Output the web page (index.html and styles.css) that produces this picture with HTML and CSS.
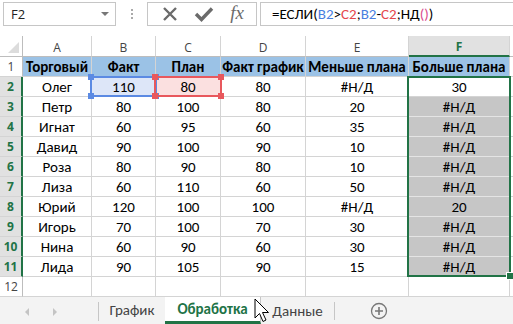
FILE: index.html
```html
<!DOCTYPE html>
<html lang="ru">
<head>
    <meta charset="UTF-8">
    <title>Обработка</title>
    <link rel="stylesheet" href="styles.css">
</head>
<body>
    <div class="app">
        <!-- Formula bar -->
        <div class="formula-bar">
            <div class="name-box">
                <span>F2</span>
                <span class="dropdown"></span>
            </div>
            <div class="grip"><i></i><i></i><i></i></div>
            <div class="fx-buttons">
                <svg width="16" height="16" viewBox="0 0 16 16"><path d="M2 2 L14 14 M14 2 L2 14" stroke="#6b6b6b" stroke-width="2.4" fill="none"/></svg>
                <svg width="20" height="16" viewBox="0 0 20 16"><path d="M2 8 L7.5 13.5 L18 2.5" stroke="#6b6b6b" stroke-width="3.4" fill="none"/></svg>
                <span class="fx">fx</span>
            </div>
            <div class="formula">=ЕСЛИ(<span class="ref-b">B2</span>&gt;<span class="ref-c">C2</span>;<span class="ref-b">B2</span>-<span class="ref-c">C2</span>;НД<span class="paren">()</span>)</div>
        </div>

        <!-- Sheet grid -->
        <div class="sheet-wrap">
            <div class="sheet">
                <div class="corner"></div>
                <div class="col-head">A</div>
                <div class="col-head">B</div>
                <div class="col-head">C</div>
                <div class="col-head">D</div>
                <div class="col-head">E</div>
                <div class="col-head active">F</div>
                <div class="filler head"></div>

                <div class="row-head">1</div>
                <div class="cell title">Торговый</div>
                <div class="cell title">Факт</div>
                <div class="cell title">План</div>
                <div class="cell title">Факт график</div>
                <div class="cell title">Меньше плана</div>
                <div class="cell title">Больше плана</div>
                <div class="filler"></div>

                <div class="row-head active">2</div>
                <div class="cell">Олег</div>
                <div class="cell ref-fill-b">110</div>
                <div class="cell ref-fill-c">80</div>
                <div class="cell">80</div>
                <div class="cell">#Н/Д</div>
                <div class="cell">30</div>
                <div class="filler"></div>

                <div class="row-head active">3</div>
                <div class="cell">Петр</div>
                <div class="cell">80</div>
                <div class="cell">100</div>
                <div class="cell">80</div>
                <div class="cell">20</div>
                <div class="cell sel">#Н/Д</div>
                <div class="filler"></div>

                <div class="row-head active">4</div>
                <div class="cell">Игнат</div>
                <div class="cell">60</div>
                <div class="cell">95</div>
                <div class="cell">60</div>
                <div class="cell">35</div>
                <div class="cell sel">#Н/Д</div>
                <div class="filler"></div>

                <div class="row-head active">5</div>
                <div class="cell">Давид</div>
                <div class="cell">90</div>
                <div class="cell">100</div>
                <div class="cell">90</div>
                <div class="cell">10</div>
                <div class="cell sel">#Н/Д</div>
                <div class="filler"></div>

                <div class="row-head active">6</div>
                <div class="cell">Роза</div>
                <div class="cell">80</div>
                <div class="cell">90</div>
                <div class="cell">80</div>
                <div class="cell">10</div>
                <div class="cell sel">#Н/Д</div>
                <div class="filler"></div>

                <div class="row-head active">7</div>
                <div class="cell">Лиза</div>
                <div class="cell">60</div>
                <div class="cell">110</div>
                <div class="cell">60</div>
                <div class="cell">50</div>
                <div class="cell sel">#Н/Д</div>
                <div class="filler"></div>

                <div class="row-head active">8</div>
                <div class="cell">Юрий</div>
                <div class="cell">120</div>
                <div class="cell">100</div>
                <div class="cell">100</div>
                <div class="cell">#Н/Д</div>
                <div class="cell sel">20</div>
                <div class="filler"></div>

                <div class="row-head active">9</div>
                <div class="cell">Игорь</div>
                <div class="cell">70</div>
                <div class="cell">100</div>
                <div class="cell">70</div>
                <div class="cell">30</div>
                <div class="cell sel">#Н/Д</div>
                <div class="filler"></div>

                <div class="row-head active">10</div>
                <div class="cell">Нина</div>
                <div class="cell">60</div>
                <div class="cell">90</div>
                <div class="cell">60</div>
                <div class="cell">30</div>
                <div class="cell sel">#Н/Д</div>
                <div class="filler"></div>

                <div class="row-head active">11</div>
                <div class="cell">Лида</div>
                <div class="cell">90</div>
                <div class="cell">105</div>
                <div class="cell">90</div>
                <div class="cell">15</div>
                <div class="cell sel">#Н/Д</div>
                <div class="filler"></div>

                <div class="row-head">12</div>
                <div class="cell"></div>
                <div class="cell"></div>
                <div class="cell"></div>
                <div class="cell"></div>
                <div class="cell"></div>
                <div class="cell"></div>
                <div class="filler"></div>
            </div>

            <!-- range highlights laid over the cells -->
            <div class="overlay">
                <div class="range range-b"><i class="h tl"></i><i class="h tr"></i><i class="h bl"></i><i class="h br"></i></div>
                <div class="range range-c"><i class="h tl"></i><i class="h tr"></i><i class="h bl"></i><i class="h br"></i></div>
                <div class="range range-sel"><i class="fill-handle"></i></div>
            </div>
        </div>

        <!-- Sheet tabs -->
        <div class="tabs">
            <div class="nav">
                <span class="arrow left"></span>
                <span class="arrow right"></span>
            </div>
            <div class="tab first">График</div>
            <div class="tab current">Обработка</div>
            <div class="tab last">Данные</div>
            <div class="add-sheet">
                <svg width="18" height="18" viewBox="0 0 18 18"><circle cx="9" cy="9" r="7.5" stroke="#777" stroke-width="1.3" fill="none"/><path d="M9 5 V13 M5 9 H13" stroke="#777" stroke-width="1.6"/></svg>
            </div>
        </div>

        <svg class="cursor" width="16" height="26" viewBox="0 0 16 26"><path d="M1 1 L1 20 L5.5 15.5 L9 23.5 L12 22 L8.5 14.5 L14.5 14.5 Z" fill="#fff" stroke="#000" stroke-width="1"/></svg>
    </div>
</body>
</html>
```

FILE: styles.css
```css
body {
    margin: 0;
    padding: 0;
    background: #fff;
    font-family: Carlito, Calibri, Roboto, "Liberation Sans", sans-serif;
}

.app {
    position: relative;
    width: 513px;
    height: 324px;
    overflow: hidden;
    background: #fff;
}

/* Formula bar */
.formula-bar {
    display: flex;
    align-items: center;
    height: 36px;
    padding: 2px 0 10px 3px;
    box-sizing: border-box;
}

.name-box {
    width: 113px;
    height: 24px;
    box-sizing: border-box;
    border: 1px solid #c6c6c6;
    display: flex;
    align-items: center;
    justify-content: space-between;
    padding: 0 6px 0 7px;
    font-family: "Open Sans", "Noto Sans", sans-serif;
    font-size: 13px;
    color: #222;
}

.dropdown {
    width: 0;
    height: 0;
    border-left: 4px solid transparent;
    border-right: 4px solid transparent;
    border-top: 4px solid #777;
}

.grip {
    width: 31px;
    display: flex;
    flex-direction: column;
    align-items: center;
    gap: 2px;
}

.grip i {
    width: 2px;
    height: 2px;
    background: #aaa;
}

.fx-buttons {
    width: 110px;
    height: 24px;
    box-sizing: border-box;
    border: 1px solid #c6c6c6;
    display: flex;
    align-items: center;
    justify-content: space-around;
    padding: 0 4px 0 6px;
}

.fx {
    font-family: "Liberation Serif", "DejaVu Serif", serif;
    font-style: italic;
    font-size: 19px;
    color: #6b6b6b;
    margin-top: -2px;
}

.formula {
    flex: 1;
    height: 24px;
    margin-left: 3px;
    box-sizing: border-box;
    border: 1px solid #c6c6c6;
    border-right: none;
    padding-left: 11px;
    line-height: 22px;
    font-size: 15px;
    color: #000;
}

.ref-b { color: #4a7fe0; }
.ref-c { color: #e4474d; }
.paren { color: #d94b8f; }

/* Sheet */
.sheet-wrap {
    position: relative;
}

.sheet,
.overlay {
    display: grid;
    grid-template-columns: 23px 69px 64px 65px 85px 103px 101px 1fr;
    grid-template-rows: 21px repeat(12, 20px);
    height: 261px;
}

.sheet {
    font-size: 15px;
    color: #000;
}

.overlay {
    position: absolute;
    inset: 0;
    pointer-events: none;
}

.sheet > div {
    box-sizing: border-box;
    border-right: 1px solid #d4d4d4;
    border-bottom: 1px solid #d4d4d4;
    display: flex;
    align-items: center;
    justify-content: center;
    white-space: nowrap;
    overflow: hidden;
}

.sheet > .corner {
    position: relative;
    border-right-color: #bdbdbd;
    border-bottom-color: #bdbdbd;
}

.corner::after {
    content: "";
    position: absolute;
    right: 3px;
    bottom: 3px;
    border-left: 11px solid transparent;
    border-bottom: 11px solid #dcdcdc;
}

.sheet > .col-head {
    font-family: "Open Sans", "Noto Sans", sans-serif;
    font-size: 12px;
    color: #444;
    border-bottom-color: #bdbdbd;
    padding-top: 2px;
}

.sheet > .col-head.active {
    background: #e1e1e1;
    color: #217346;
    font-weight: bold;
    border-bottom: 2px solid #217346;
}

.sheet > .filler {
    border-right: none;
}

.sheet > .filler.head {
    border-bottom-color: #bdbdbd;
}

.sheet > .row-head {
    font-family: "Open Sans", "Noto Sans", sans-serif;
    font-size: 12px;
    color: #444;
    border-right-color: #bdbdbd;
}

.sheet > .row-head.active {
    background: #e1e1e1;
    color: #217346;
    font-weight: bold;
    border-right: 2px solid #217346;
}

.cell.title {
    background: #9bc2e6;
    font-weight: bold;
}

.sheet > .cell.sel {
    background: #c6c6c6;
    border-bottom-color: #e4e4e4;
}

.ref-fill-b { background: #dde6f8; }
.ref-fill-c { background: #fbe0e0; }

/* Range borders drawn over the grid */
.range {
    position: relative;
    box-sizing: border-box;
    border: 2px solid;
    margin: -1px -1px 0 -2px;
}

.range-b {
    grid-column: 3;
    grid-row: 3;
    border-color: #5b8ae3;
}

.range-c {
    grid-column: 4;
    grid-row: 3;
    border-color: #e8585d;
}

.range-sel {
    grid-column: 7;
    grid-row: 3 / 13;
    border-color: #217346;
}

.h {
    position: absolute;
    width: 6px;
    height: 6px;
}

.range-b .h { background: #5b8ae3; }
.range-c .h { background: #e8585d; }

.tl { left: -4px; top: -4px; }
.tr { right: -4px; top: -4px; }
.bl { left: -4px; bottom: -4px; }
.br { right: -4px; bottom: -4px; }

.fill-handle {
    position: absolute;
    right: -5px;
    bottom: -5px;
    width: 6px;
    height: 6px;
    background: #217346;
    border: 1px solid #fff;
}

/* Sheet tabs */
.tabs {
    display: flex;
    height: 27px;
    background: #f3f3f3;
    font-size: 15px;
    color: #444;
}

.nav {
    width: 99px;
    display: flex;
    align-items: center;
    padding-left: 25px;
    gap: 24px;
    box-sizing: border-box;
    border-right: 1px solid #c6c6c6;
    margin: 5px 0 3px;
}

.arrow {
    width: 0;
    height: 0;
    border-top: 4px solid transparent;
    border-bottom: 4px solid transparent;
}

.arrow.left { border-right: 4px solid #c4c4c4; }
.arrow.right { border-left: 4px solid #c4c4c4; }

.tab {
    display: flex;
    align-items: center;
    justify-content: center;
    box-sizing: border-box;
}

.tab.first {
    width: 66px;
    padding-bottom: 2px;
}

.tab.current {
    width: 96px;
    background: #fff;
    color: #217346;
    font-weight: bold;
    border-right: 1px solid #c6c6c6;
    border-bottom: 3px solid #217346;
}

.tab.last {
    width: 74px;
    margin: 5px 0 4px;
    border-right: 1px solid #c6c6c6;
}

.add-sheet {
    display: flex;
    align-items: center;
    padding-left: 35px;
}

.cursor {
    position: absolute;
    left: 254px;
    top: 298px;
}
```
